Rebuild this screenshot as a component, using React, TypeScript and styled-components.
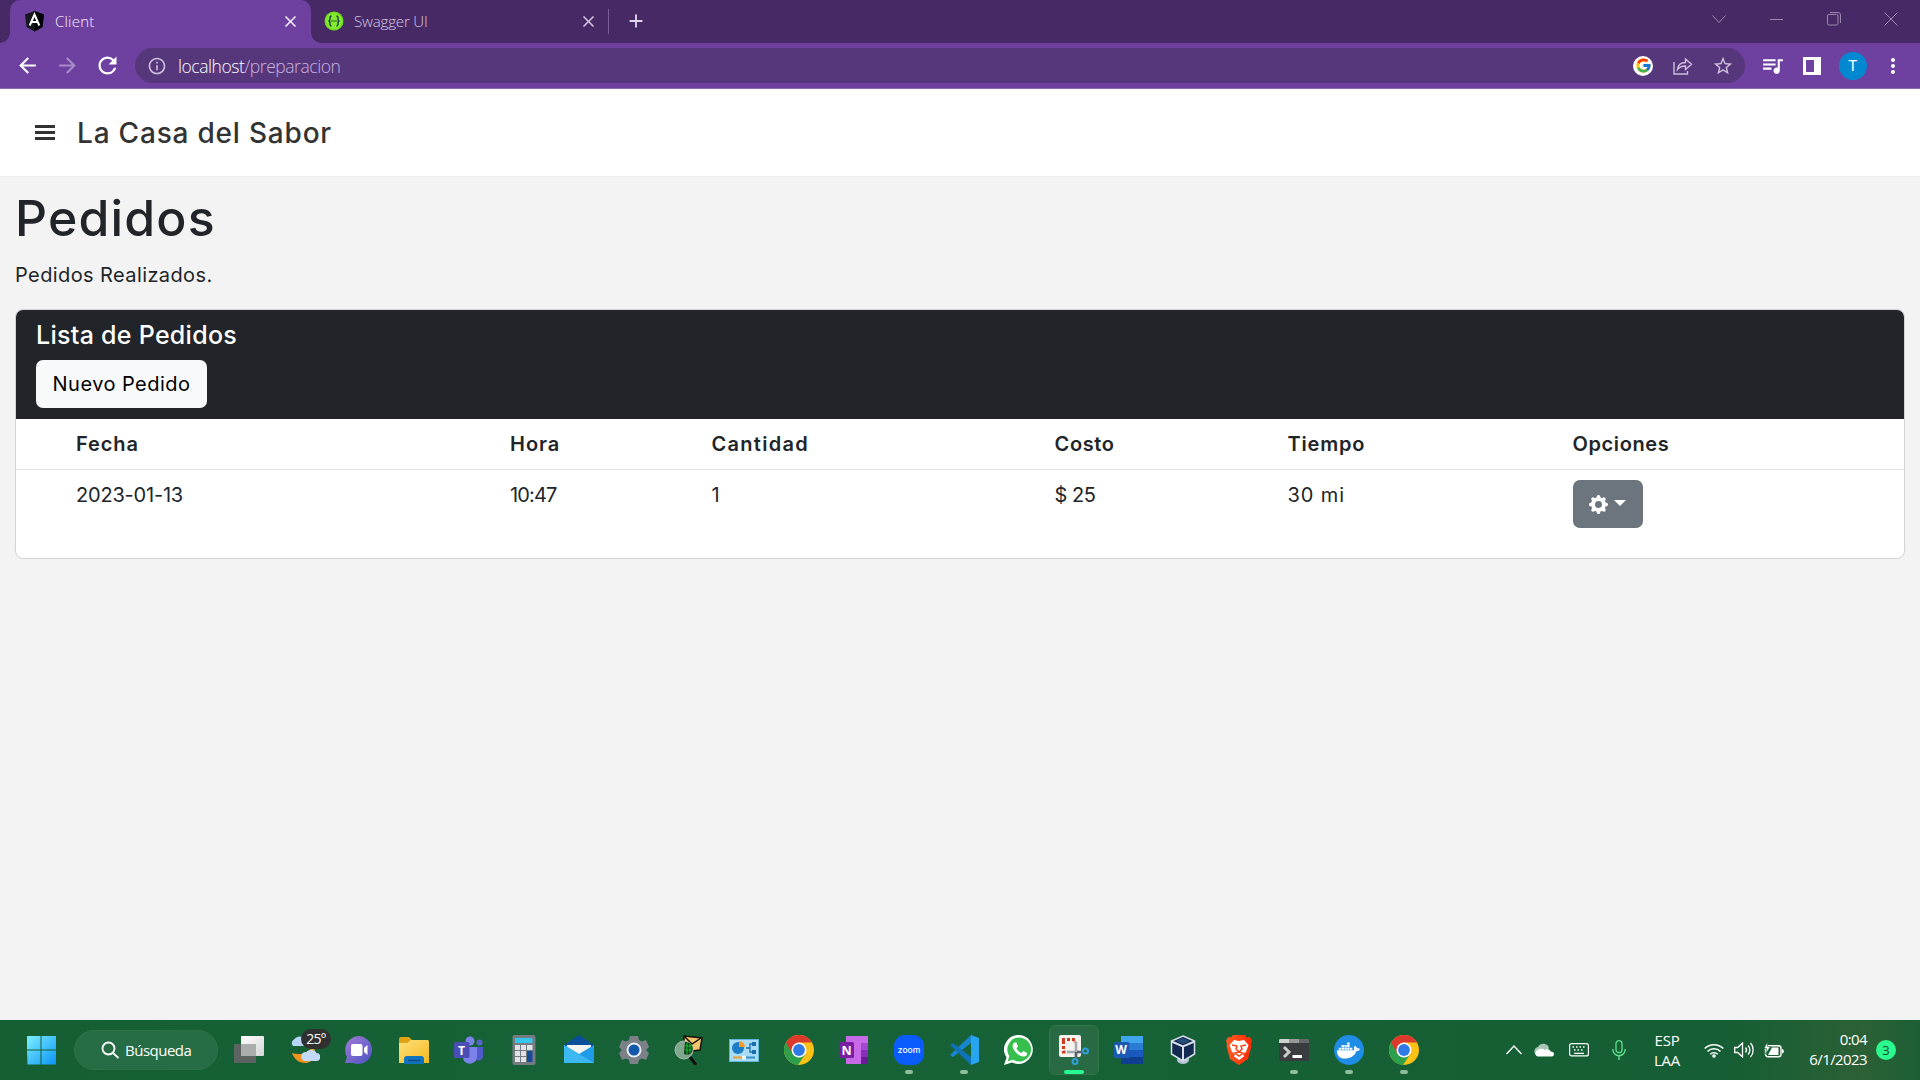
import React from "react";
import styled, { createGlobalStyle } from "styled-components";
import {
  MdArrowBack,
  MdArrowForward,
  MdClose,
  MdInfoOutline,
  MdQueueMusic,
  MdRefresh,
  MdStarBorder,
  MdAdd,
  MdMoreVert,
} from "react-icons/md";
import { FcGoogle } from "react-icons/fc";
import { BsGearFill } from "react-icons/bs";
import { FaDocker } from "react-icons/fa";

const GlobalStyle = createGlobalStyle`
  * { box-sizing: border-box; }
  body { margin: 0; background: #f3f3f3; overflow: hidden; }
  h1, h2, h3, p { margin: 0; font-weight: inherit; }
  button { font: inherit; border: 0; padding: 0; margin: 0; color: inherit; background: none; }
  svg { display: block; flex: none; }
`;

const ui = `"Open Sans", "Noto Sans", sans-serif`;
const brand = `Inter, "Noto Sans", sans-serif`;

const Screen = styled.div`
  width: 1920px;
  height: 1080px;
  display: flex;
  flex-direction: column;
  background: #f3f3f3;
  font-family: ${brand};
`;

/* ---------- browser ---------- */

const TabStrip = styled.div`
  height: 43px;
  flex: none;
  display: flex;
  background: #472a65;
  padding-left: 10px;
  color: #d5c6e6;
`;

const Tab = styled.div<{ $active?: boolean }>`
  width: ${(p) => (p.$active ? 301 : 297)}px;
  height: 43px;
  display: flex;
  align-items: center;
  padding: 0 ${(p) => (p.$active ? 11 : 10)}px 1px ${(p) => (p.$active ? 14 : 13)}px;
  border-radius: 10px 10px 0 0;
  background: ${(p) => (p.$active ? "#6e41a1" : "transparent")};
  color: ${(p) => (p.$active ? "#f6f0fc" : "#d5c6e6")};
  position: relative;

  &::before,
  &::after {
    content: "";
    display: ${(p) => (p.$active ? "block" : "none")};
    position: absolute;
    bottom: 0;
    width: 10px;
    height: 10px;
  }
  &::before {
    left: -10px;
    background: radial-gradient(circle at 0 0, transparent 9.5px, #6e41a1 10px);
  }
  &::after {
    right: -10px;
    background: radial-gradient(circle at 100% 0, transparent 9.5px, #6e41a1 10px);
  }
`;

const TabTitle = styled.span<{ $spacing: number }>`
  flex: 1;
  margin-left: 10px;
  font: 300 15px/20px ${ui};
  letter-spacing: ${(p) => p.$spacing}px;
`;

const TabDivider = styled.i`
  width: 1px;
  height: 25px;
  margin-top: 9px;
  background: #7a5f96;
`;

const NewTab = styled.div`
  width: 54px;
  height: 42px;
  display: grid;
  place-items: center;
  color: #e2d8ee;
`;

const WindowButtons = styled.div`
  margin-left: auto;
  display: flex;
`;

const WindowButton = styled.button`
  width: 57.3px;
  height: 37px;
  display: grid;
  place-items: center;
  color: #9c87b1;
`;

const Toolbar = styled.div`
  height: 46px;
  flex: none;
  display: flex;
  align-items: center;
  background: #6e41a1;
  border-bottom: 1px solid #8a6cae;
  padding-left: 7px;
  color: #fff;
`;

const NavButton = styled.button<{ $dim?: boolean }>`
  width: 40px;
  height: 40px;
  display: grid;
  place-items: center;
  color: ${(p) => (p.$dim ? "#a98bc9" : "#fff")};
`;

const AddressBar = styled.div`
  width: 1610px;
  height: 35px;
  margin-left: 8px;
  border-radius: 18px;
  display: flex;
  align-items: center;
  background: #57377b;
  color: #cdbfdc;
  padding: 0 12px;
`;

const Url = styled.span`
  flex: 1;
  margin-left: 11px;
  font: 300 17.5px/24px ${ui};
  letter-spacing: -0.45px;
  color: #c9b3e2;

  b {
    font-weight: 300;
    color: #fff;
  }
`;

const GoogleBadge = styled.span`
  width: 20px;
  height: 20px;
  border-radius: 50%;
  background: #fff;
  display: grid;
  place-items: center;
`;

const AddressAction = styled.span`
  width: 40px;
  display: grid;
  place-items: center;
`;

const AddressActions = styled.div`
  display: flex;
  align-items: center;
  margin-right: -10px;
`;

const ToolbarActions = styled.div`
  display: flex;
  align-items: center;
  margin-left: 7px;
`;

const ToolbarAction = styled.span`
  width: 40.3px;
  display: grid;
  place-items: center;
`;

const Avatar = styled.span`
  width: 28px;
  height: 28px;
  border-radius: 50%;
  background: #0288d1;
  display: grid;
  place-items: center;
  font: 400 15px/28px Roboto, sans-serif;
`;

/* ---------- page ---------- */

const PageHeader = styled.header`
  height: 88px;
  flex: none;
  display: flex;
  align-items: center;
  background: #fff;
  padding-left: 35px;
  border-bottom: 1px solid #ececec;
  color: #333;
`;

const MenuButton = styled.button`
  width: 20px;
  height: 15px;
  display: flex;
  flex-direction: column;
  justify-content: space-between;

  i {
    height: 3px;
    background: #333;
  }
`;

const Brand = styled.span`
  margin-left: 22px;
  font: 500 28px/40px ${brand};
  letter-spacing: 0.8px;
`;

const Content = styled.main`
  flex: 1;
  padding: 9px 15px 0;
  color: #212529;
`;

const Title = styled.h1`
  font: 500 50px/64px ${brand};
  letter-spacing: 1.15px;
`;

const Subtitle = styled.p`
  margin-top: 10px;
  font: 400 20px/30px ${brand};
  letter-spacing: 0.4px;
`;

const Card = styled.section`
  width: 1890px;
  height: 250px;
  margin-top: 19px;
  border: 1px solid #d2d3d4;
  border-radius: 8px;
  background: #fff;
  overflow: hidden;
`;

const CardHeader = styled.header`
  height: 109px;
  background: #212529;
  padding: 10px 20px 0;
`;

const CardTitle = styled.h2`
  color: #fff;
  font: 500 25px/30px ${brand};
  letter-spacing: 0.28px;
`;

const NewOrderButton = styled.button`
  width: 171px;
  height: 48px;
  margin-top: 10px;
  border-radius: 7px;
  background: #f8f9fa;
  color: #000;
  font: 400 20px/49px ${brand};
  letter-spacing: 0.46px;
`;

const TableRow = styled.div<{ $head?: boolean }>`
  display: grid;
  grid-template-columns: 434px 201.5px 343px 233px 285px 1fr;
  height: ${(p) => (p.$head ? 51 : 88)}px;
  padding: 10px 0 0 60px;
  border-bottom: ${(p) => (p.$head ? "1px solid #dee2e6" : "0")};
  font: ${(p) => (p.$head ? 600 : 400)} 20px/31px ${brand};
`;

const Cell = styled.span<{ $spacing: number }>`
  letter-spacing: ${(p) => p.$spacing}px;
`;

const OptionsButton = styled.button`
  width: 70px;
  height: 48px;
  border-radius: 7px;
  background: #6c757d;
  color: #fff;
  display: flex;
  align-items: center;
  justify-content: center;
  gap: 6px;
`;

const Caret = styled.i`
  border: 6px solid transparent;
  border-top-color: #fff;
  border-bottom: 0;
  margin-top: -2px;
`;

/* ---------- taskbar ---------- */

const Taskbar = styled.footer`
  height: 60px;
  flex: none;
  display: flex;
  align-items: center;
  background: linear-gradient(90deg, #165f35 0, #176236 45%, #165e35 90%, #2c6035 97%, #1d5f35 100%);
  padding-left: 26px;
  color: #fff;
  font: 400 15px/20px ${ui};
`;

const SearchPill = styled.div`
  width: 144px;
  height: 40px;
  margin-left: 18px;
  border-radius: 20px;
  border: 1px solid #2f7249;
  background: #266c44;
  display: flex;
  align-items: center;
  padding-left: 26px;
  gap: 5px;
  letter-spacing: -0.5px;
`;

const Apps = styled.div`
  display: flex;
  margin-left: 3px;
`;

const AppSlot = styled.div<{ $state?: "open" | "active" }>`
  width: 55px;
  height: 60px;
  display: grid;
  place-items: center;
  position: relative;

  &::before {
    content: "";
    display: ${(p) => (p.$state === "active" ? "block" : "none")};
    position: absolute;
    inset: 5px 2px 5px 3px;
    border-radius: 6px;
    border: 1px solid #33744b;
    background: #286a44;
  }
  &::after {
    content: "";
    display: ${(p) => (p.$state ? "block" : "none")};
    position: absolute;
    bottom: 6px;
    width: ${(p) => (p.$state === "active" ? 20 : 8)}px;
    height: 4px;
    border-radius: 2px;
    background: ${(p) => (p.$state === "active" ? "#25fb90" : "#8fbb9f")};
  }
  svg {
    position: relative;
  }
`;

const WeatherBadge = styled.span`
  position: absolute;
  left: 25px;
  top: 9px;
  width: 30px;
  height: 20px;
  border-radius: 10px;
  background: #303030;
  text-align: center;
  font: 400 14px/20px ${ui};
  letter-spacing: -0.9px;
`;

const Tray = styled.div`
  margin-left: auto;
  display: flex;
  align-items: center;
  height: 60px;
`;

const TrayIcon = styled.span<{ $width: number }>`
  width: ${(p) => p.$width}px;
  display: grid;
  place-items: center;
`;

const Language = styled.div`
  width: 56px;
  margin-top: -1px;
  text-align: center;
  letter-spacing: -0.2px;
`;

const Clock = styled.div`
  width: 74px;
  margin-top: -2px;
  text-align: right;
  letter-spacing: -0.6px;
`;

const Count = styled.span`
  width: 20px;
  height: 20px;
  margin: 0 24px 0 9px;
  border-radius: 50%;
  background: #2bfb8e;
  color: #14452a;
  text-align: center;
  font: 400 13px/20px ${ui};
`;

const Glyph = ({ children, w = 30, h = 30 }: { children: React.ReactNode; w?: number; h?: number }) => (
  <svg width={w} height={h} viewBox={`0 0 ${w} ${h}`} fill="none">
    {children}
  </svg>
);

const LetterMark = styled.text`
  font-family: "Open Sans", sans-serif;
  font-weight: 700;
  fill: #fff;
`;

const ChromeLogo = () => (
  <Glyph>
    <circle cx="15" cy="15" r="15" fill="#fbc116" />
    <path d="M15 15 2 7.5A15 15 0 0 0 14 30L21.500 18.750z" fill="#2da04c" />
    <path d="M2 7.500A15 15 0 0 1 28 7.500H15L8.500 18.750z" fill="#dc3a2d" />
    <circle cx="15" cy="15" r="7.500" fill="#fff" />
    <circle cx="15" cy="15" r="5.900" fill="#2f7ae5" />
  </Glyph>
);

const AngularLogo = () => (
  <Glyph w={21} h={22}>
    <path d="M10.500 1 20 4.400 18.500 17 10.500 21.500 2.500 17 1 4.400z" fill="#17171f" />
    <path d="M10.500 1 20 4.400 18.500 17 10.500 21.500z" fill="#050509" />
    <path d="m5.700 15.500 4.800-11 4.800 11M7.500 12h6" stroke="#fff" strokeWidth="2" />
  </Glyph>
);

const SwaggerLogo = () => (
  <Glyph w={20} h={20}>
    <circle cx="10" cy="10" r="9.500" fill="#6ddb1f" />
    <circle cx="10" cy="10" r="8" fill="#85ea2d" />
    <path
      d="M7.500 5C6 5 6 6 6 7.500S6 10 4.500 10C6 10 6 11 6 12.500S6 15 7.500 15M12.500 5C14 5 14 6 14 7.500S14 10 15.500 10C14 10 14 11 14 12.500S14 15 12.500 15M7.500 10h1m1 0h1m1 0h1"
      stroke="#173647"
      strokeWidth="1.300"
    />
  </Glyph>
);

const WindowsLogo = () => (
  <Glyph>
    <defs>
      <linearGradient id="win" x1="0" y1="0" x2="1" y2="1">
        <stop stopColor="#7df0ff" />
        <stop offset="1" stopColor="#0a93f5" />
      </linearGradient>
    </defs>
    <path d="M1.500 1h13v13.500H1V1.500zM15.500 1H30v13.500H15.500zM1 15.500h13.500v14h-13zM15.500 15.500H30v14H15.500z" fill="url(#win)" />
  </Glyph>
);

const TaskView = () => (
  <Glyph>
    <defs>
      <linearGradient id="tv" x1="0" y1="0" x2="1" y2="1">
        <stop stopColor="#fff" />
        <stop offset="1" stopColor="#d5d5d5" />
      </linearGradient>
    </defs>
    <rect x="0" y="9" width="22" height="19" rx="1" fill="#5d6360" />
    <rect x="7" y="1" width="23" height="20" rx="1" fill="url(#tv)" />
    <path d="M7 9h15v12H7z" fill="#a9adab" />
  </Glyph>
);

const Weather = () => (
  <Glyph w={32} h={34}>
    <path d="M5 13h10a4 4 0 0 0 0-8 6 6 0 0 0-9 1.500A4 4 0 0 0 5 13z" fill="#b9d5f5" />
    <path d="M4 20c5 2 11 1 15-1l6-5c5 6 1 16-8 16C11 30 6 26 4 20z" fill="#f2931d" />
    <path d="M17 28h11a4 4 0 0 0 .5-8 6 6 0 0 0-10-1 4.500 4.500 0 0 0-1.500 9z" fill="#c3daf8" />
  </Glyph>
);

const Chat = () => (
  <Glyph>
    <defs>
      <linearGradient id="chat" x1="0" y1="0" x2="1" y2="1">
        <stop stopColor="#a47bd3" />
        <stop offset="1" stopColor="#4a54c4" />
      </linearGradient>
    </defs>
    <path d="M15 1a14 14 0 1 1-6 27H1l2-6A14 14 0 0 1 15 1z" fill="url(#chat)" />
    <rect x="7" y="9" width="11.500" height="12" rx="2" fill="#fff" />
    <path d="m20 13 3.500-3v10L20 17z" fill="#fff" />
  </Glyph>
);

const Explorer = () => (
  <Glyph>
    <defs>
      <linearGradient id="fold" x1="0" y1="0" x2="1" y2="1">
        <stop stopColor="#ffe07a" />
        <stop offset="1" stopColor="#f4b91f" />
      </linearGradient>
    </defs>
    <path d="M0 4c0-1 .5-2 2-2h8l3 3-3 6H0z" fill="#e0a316" />
    <path d="M0 8h8l4-3h16c1.500 0 2 .5 2 2v21H0z" fill="url(#fold)" />
    <path d="M5 29v-5c0-2 1-3 3-3h14c2 0 3 1 3 3v5z" fill="#0f72bd" />
    <path d="M9 25.500h12" stroke="#0a4f8b" strokeWidth="1.500" />
  </Glyph>
);

const Teams = () => (
  <Glyph>
    <circle cx="16" cy="6" r="4.500" fill="#7b83eb" />
    <circle cx="25.500" cy="7.500" r="3" fill="#5a62cf" />
    <path d="M20 12h9v9c0 5-6 6-9 3z" fill="#5059c9" />
    <path d="M9 12h14v9c0 10-14 10-14 1z" fill="#7b83eb" />
    <rect x="0" y="7" width="15.500" height="16" rx="1.500" fill="#4b4fb5" />
    <LetterMark x="4" y="19.500" fontSize="12">T</LetterMark>
  </Glyph>
);

const Calculator = () => (
  <Glyph w={24}>
    <rect x="0.500" y="0" width="23" height="30" rx="2" fill="#757b80" />
    <path d="M3 3h17.500v5H3z" fill="#35c6ec" />
    <path d="M3 10h5v5H3zm6 0h5v5H9zm6 0h5.500v5H15zM3 16h5v5H3zm6 0h5v5H9zm-6 6h5v5H3zm6 0h5v5H9z" fill="#dfe3e6" />
    <path d="M15 16h5.500v11H15z" fill="#164b98" />
  </Glyph>
);

const Mail = () => (
  <Glyph>
    <path d="M0 10 15 0l15 10v8H0z" fill="#0a4f9c" />
    <path d="M3 10h24v10H3z" fill="#f3f3f3" />
    <path d="M0 10l15 9 15-9v18H0z" fill="#1f9ce8" />
    <path d="M0 10v18h30z" fill="#3cb9f2" />
  </Glyph>
);

const Settings = () => (
  <Glyph>
    <path
      d="M11 1h8l1 4 3 1.500 4-1.500 3 7-3 3 3 3-3 7-4-1.500L20 25l-1 4h-8l-1-4-3-1.500L3 25l-3-7 3-3-3-3 3-7 4 1.500L10 5z"
      fill="#7b8187"
    />
    <circle cx="15" cy="15" r="7.500" fill="#e9edf0" />
    <circle cx="15" cy="15" r="5.500" fill="#1458ac" />
  </Glyph>
);

const MailSearch = () => (
  <Glyph>
    <path d="m10 1 18 2-2 12-16 2z" fill="#f3c66d" stroke="#191307" strokeWidth="1.500" />
    <path d="m11 2 7 7 9-6" stroke="#191307" strokeWidth="1.500" />
    <circle cx="10" cy="15" r="9" fill="#86aa93" fillOpacity=".95" stroke="#a9bcaf" />
    <path d="M11 7c6 0 9 4 7 10-2 3-5 3-8 2z" fill="#0a3d10" />
    <path d="M13 8v11m3-10v9M11 11h7m-7 4h7" stroke="#16b52e" strokeWidth="1.200" />
    <path d="m16 22 6 8" stroke="#111" strokeWidth="3" />
  </Glyph>
);

const ControlPanel = () => (
  <Glyph>
    <rect x=".5" y="4.500" width="29" height="22" fill="#a9dcf5" stroke="#5fb5dd" />
    <circle cx="9" cy="13" r="6" fill="#1b7cc7" />
    <path d="M10 12V6a6 6 0 0 1 6 6z" fill="#f49b2a" />
    <path d="M17 13h4V9h3m-3 4v4h3" stroke="#1a6cb0" strokeWidth="1.300" />
    <path d="M23 7h4v4h-4zm0 8h4v4h-4z" fill="#1a6cb0" />
    <path d="M4 22.500h10" stroke="#f49b2a" strokeWidth="2" />
    <path d="M14 22.500h12" stroke="#3090cc" strokeWidth="2" />
    <circle cx="15" cy="22.500" r="2" fill="#fff" />
  </Glyph>
);

const OneNote = () => (
  <Glyph>
    <path d="M7 1h22v28H7z" fill="#c86ae8" />
    <path d="M22 8h7v7h-7z" fill="#a548d0" />
    <path d="M22 15h7v7h-7z" fill="#8b2fba" />
    <path d="M22 22h7v7h-7z" fill="#6a1c96" />
    <rect x="0" y="7" width="15" height="16" rx="1.500" fill="#7a1fa2" />
    <LetterMark x="2.500" y="19.500" fontSize="12.500">N</LetterMark>
  </Glyph>
);

const Zoom = () => (
  <Glyph>
    <rect width="30" height="30" rx="11" fill="#0b5cff" />
    <text x="15" y="17.500" textAnchor="middle" fontFamily="Inter, sans-serif" fontWeight="500" fontSize="8.500" fill="#fff">
      zoom
    </text>
  </Glyph>
);

const VsCode = () => (
  <Glyph>
    <path d="m1 20 21-20v8L4 22z" fill="#1a86d0" />
    <path d="m1 10 3-2 18 14v8z" fill="#0f72ba" />
    <path d="m22 0 8 3v24l-8 3z" fill="#27a5ee" />
  </Glyph>
);

const WhatsApp = () => (
  <Glyph>
    <path d="M15.500 0A14.500 14.500 0 1 1 8 27.500L0 30l2.500-7.500A14.500 14.500 0 0 1 15.500 0z" fill="#fff" />
    <path d="M15.500 2.500A12 12 0 1 1 9 24.800L3.800 26.200 5.300 21A12 12 0 0 1 15.500 2.500z" fill="#37bf4e" />
    <path
      d="M11 7.500c-3 1-3 4-1 7.500 3 4.500 7 7 10.500 6.500 2-.5 3-2 2.500-3.500l-3.500-2-2 2c-2-.5-4-2.500-5-4.500l1.500-2-1.500-4z"
      fill="#fff"
    />
  </Glyph>
);

const Snip = () => (
  <Glyph>
    <rect x="0" y="0" width="22" height="22" rx="2" fill="#f5f2f0" />
    <path d="M3 4.500h13v3M4.500 6v11H9" stroke="#cf3b20" strokeWidth="3" strokeDasharray="3 2" />
    <path d="M17 7v15M8 17h15" stroke="#a3a9ac" strokeWidth="2.500" />
    <path d="M17 17v7m1-7h6" stroke="#5b6468" strokeWidth="2.500" />
    <circle cx="16" cy="26.500" r="2.500" stroke="#2f9fdb" strokeWidth="2" />
    <circle cx="26.500" cy="16" r="2.500" stroke="#2f9fdb" strokeWidth="2" />
  </Glyph>
);

const Word = () => (
  <Glyph>
    <path d="M7 1h22v7H7z" fill="#41a5ee" />
    <path d="M7 8h22v7H7z" fill="#2b7cd3" />
    <path d="M7 15h22v7H7z" fill="#185abd" />
    <path d="M7 22h22v7H7z" fill="#103f91" />
    <rect x="0" y="7" width="15.500" height="16" rx="1.500" fill="#1b59b5" />
    <LetterMark x="1.200" y="19" fontSize="12">W</LetterMark>
  </Glyph>
);

const VirtualBox = () => (
  <Glyph w={28}>
    <ellipse cx="13" cy="25" rx="6" ry="4" fill="#b4c3d3" />
    <path d="m13 1 11.500 5v13L13 26 1.500 19V6z" fill="#13294f" stroke="#d5deea" strokeWidth="1.500" />
    <path d="m1.500 6.500 11.500 5 11.500-5M13 11.500V26" stroke="#d5deea" strokeWidth="2" />
    <path d="m6 6 7-3 7 3-7 3z" fill="#274c78" />
  </Glyph>
);

const Brave = () => (
  <Glyph w={26}>
    <defs>
      <linearGradient id="brave" x1="0" y1="0" x2="1" y2="0">
        <stop stopColor="#ff5a1f" />
        <stop offset="1" stopColor="#fb2b08" />
      </linearGradient>
    </defs>
    <path d="M7 0h12l2 2.500 3-.5 2 4-1 3 .5 2L22 24l-9 6-9-6L.5 11 1 9 0 6l2-4 3 .5z" fill="url(#brave)" />
    <path
      d="m8 5 5 1 5-1 4.500 5-2.500 7-3 2 1 2.500L13 25l-5-3.500L9 19l-3-2-2.500-7z"
      fill="#fff"
    />
    <path d="m6 10 5 1-1 3 3 3 3-3-1-3 5-1M9 18l4-1 4 1-4 3z" stroke="#fb4314" strokeWidth="1.500" />
  </Glyph>
);

const Terminal = () => (
  <Glyph>
    <rect x="0" y="4" width="30" height="22" rx="1.500" fill="#3a3d3f" />
    <path d="M0 8V5.500C0 4.500.5 4 1.500 4H10v4z" fill="#cfd1d1" />
    <path d="M10 4h10v4H10z" fill="#96999a" />
    <path d="M20 4h8.500c1 0 1.500.5 1.500 1.500V8H20z" fill="#66696a" />
    <path d="m5 12 5 5-5 5" stroke="#c9cbcb" strokeWidth="3" />
    <path d="M13.500 21.500H23" stroke="#fff" strokeWidth="3" />
  </Glyph>
);

const DockerBadge = styled.span`
  width: 30px;
  height: 30px;
  border-radius: 50%;
  background: #1f8ce6;
  color: #fff;
  display: grid;
  place-items: center;
`;

const apps: { name: string; icon: React.ReactNode; state?: "open" | "active" }[] = [
  { name: "taskview", icon: <TaskView /> },
  { name: "weather", icon: <><Weather /><WeatherBadge>25°</WeatherBadge></> },
  { name: "chat", icon: <Chat /> },
  { name: "explorer", icon: <Explorer /> },
  { name: "teams", icon: <Teams /> },
  { name: "calculator", icon: <Calculator /> },
  { name: "mail", icon: <Mail /> },
  { name: "settings", icon: <Settings /> },
  { name: "mailsearch", icon: <MailSearch /> },
  { name: "panel", icon: <ControlPanel /> },
  { name: "chrome", icon: <ChromeLogo /> },
  { name: "onenote", icon: <OneNote /> },
  { name: "zoom", icon: <Zoom />, state: "open" },
  { name: "vscode", icon: <VsCode />, state: "open" },
  { name: "whatsapp", icon: <WhatsApp /> },
  { name: "snip", icon: <Snip />, state: "active" },
  { name: "word", icon: <Word /> },
  { name: "virtualbox", icon: <VirtualBox /> },
  { name: "brave", icon: <Brave /> },
  { name: "terminal", icon: <Terminal />, state: "open" },
  { name: "docker", icon: <DockerBadge><FaDocker size={23} /></DockerBadge>, state: "open" },
  { name: "chrome2", icon: <ChromeLogo />, state: "open" },
];

const columns: [string, number][] = [
  ["Fecha", 0.9],
  ["Hora", 1],
  ["Cantidad", 1.3],
  ["Costo", 0.65],
  ["Tiempo", 0.8],
  ["Opciones", 0.6],
];

const order: [string, number][] = [
  ["2023-01-13", -0.2],
  ["10:47", -0.85],
  ["1", 0],
  ["$ 25", -0.5],
  ["30 mi", 0.9],
];

export default function App() {
  return (
    <Screen>
      <GlobalStyle />
      <TabStrip>
        <Tab $active>
          <AngularLogo />
          <TabTitle $spacing={0.2}>Client</TabTitle>
          <MdClose size={19} />
        </Tab>
        <Tab>
          <SwaggerLogo />
          <TabTitle $spacing={-0.15}>Swagger UI</TabTitle>
          <MdClose size={19} />
        </Tab>
        <TabDivider />
        <NewTab>
          <MdAdd size={22} />
        </NewTab>
        <WindowButtons>
          <WindowButton>
            <Glyph w={14} h={14}>
              <path d="m.5 3.500 6.500 7 6.500-7" stroke="currentColor" />
            </Glyph>
          </WindowButton>
          <WindowButton>
            <Glyph w={14} h={14}>
              <path d="M0 7.500h13" stroke="currentColor" />
            </Glyph>
          </WindowButton>
          <WindowButton>
            <Glyph w={14} h={14}>
              <rect x=".5" y="2.500" width="10.500" height="10.500" rx="1.500" stroke="currentColor" />
              <path d="M3 .5h8a2.500 2.500 0 0 1 2.500 2.500v8" stroke="currentColor" />
            </Glyph>
          </WindowButton>
          <WindowButton>
            <Glyph w={14} h={14}>
              <path d="m.5.5 13 13m0-13-13 13" stroke="currentColor" />
            </Glyph>
          </WindowButton>
        </WindowButtons>
      </TabStrip>

      <Toolbar>
        <NavButton><MdArrowBack size={25} /></NavButton>
        <NavButton $dim><MdArrowForward size={25} /></NavButton>
        <NavButton><MdRefresh size={27} /></NavButton>
        <AddressBar>
          <MdInfoOutline size={20} />
          <Url><b>localhost</b>/preparacion</Url>
          <AddressActions>
            <AddressAction>
              <GoogleBadge><FcGoogle size={17} /></GoogleBadge>
            </AddressAction>
            <AddressAction>
              <Glyph w={20} h={18}>
                <path d="M1 5v12h13.500v-3M4.500 12.500C5 8 8 5.500 12.500 5.500V2L18.500 7.300 12.500 12.500V9C9 9 6.500 10 4.500 12.500z" stroke="currentColor" strokeWidth="1.400" />
              </Glyph>
            </AddressAction>
            <AddressAction><MdStarBorder size={22} /></AddressAction>
          </AddressActions>
        </AddressBar>
        <ToolbarActions>
          <ToolbarAction><MdQueueMusic size={25} /></ToolbarAction>
          <ToolbarAction>
            <Glyph w={18} h={18}>
              <path d="M1.500 1.500h15v15h-15z" stroke="#fff" strokeWidth="3" />
              <path d="M11 1h6v16h-6z" fill="#fff" />
            </Glyph>
          </ToolbarAction>
          <ToolbarAction><Avatar>T</Avatar></ToolbarAction>
          <ToolbarAction><MdMoreVert size={24} /></ToolbarAction>
        </ToolbarActions>
      </Toolbar>

      <PageHeader>
        <MenuButton aria-label="Menu"><i /><i /><i /></MenuButton>
        <Brand>La Casa del Sabor</Brand>
      </PageHeader>

      <Content>
        <Title>Pedidos</Title>
        <Subtitle>Pedidos Realizados.</Subtitle>
        <Card>
          <CardHeader>
            <CardTitle>Lista de Pedidos</CardTitle>
            <NewOrderButton>Nuevo Pedido</NewOrderButton>
          </CardHeader>
          <TableRow $head>
            {columns.map(([label, spacing]) => (
              <Cell key={label} $spacing={spacing}>{label}</Cell>
            ))}
          </TableRow>
          <TableRow>
            {order.map(([value, spacing]) => (
              <Cell key={value} $spacing={spacing}>{value}</Cell>
            ))}
            <OptionsButton aria-label="Opciones">
              <BsGearFill size={19} />
              <Caret />
            </OptionsButton>
          </TableRow>
        </Card>
      </Content>

      <Taskbar>
        <WindowsLogo />
        <SearchPill>
          <Glyph w={19} h={18}>
            <circle cx="7.500" cy="7.500" r="6" stroke="#fff" strokeWidth="1.800" />
            <path d="m12 12 5.500 5" stroke="#fff" strokeWidth="1.800" />
          </Glyph>
          Búsqueda
        </SearchPill>
        <Apps>
          {apps.map((app) => (
            <AppSlot key={app.name} $state={app.state}>{app.icon}</AppSlot>
          ))}
        </Apps>
        <Tray>
          <TrayIcon $width={30}>
            <Glyph w={16} h={10}>
              <path d="m.5 9 7.500-8 7.500 8" stroke="#fff" strokeWidth="1.300" />
            </Glyph>
          </TrayIcon>
          <TrayIcon $width={30}>
            <Glyph w={20} h={14}>
              <path d="M3 12.500A4.500 4.500 0 0 1 4 4a6 6 0 0 1 11 1l-3 6z" fill="#a9c7b4" />
              <path d="M3.500 13.500a3.500 3.500 0 0 1 0-6.500c3-2 5-1.500 7.500 0 2-1.500 5-1 5.500 1.500 4.500 0 4.500 5 1 5z" fill="#fff" />
            </Glyph>
          </TrayIcon>
          <TrayIcon $width={40}>
            <Glyph w={20} h={14}>
              <rect x=".6" y=".6" width="18.800" height="12.300" rx="2" stroke="#fff" strokeWidth="1.200" />
              <path d="M3.500 4h1.500m2 0h1.500m2 0H12m2 0h1.500M5 7h1.500m2 0H10m2 0h1.500M5 10.300h10" stroke="#fff" strokeWidth="1.300" />
            </Glyph>
          </TrayIcon>
          <TrayIcon $width={40}>
            <Glyph w={14} h={20}>
              <rect x="4" y=".7" width="6" height="12" rx="3" stroke="#5fe08c" strokeWidth="1.300" />
              <path d="M.8 9c0 9 12.400 9 12.400 0M7 15.500V20" stroke="#5fe08c" strokeWidth="1.400" />
            </Glyph>
          </TrayIcon>
          <Language>ESP<br />LAA</Language>
          <TrayIcon $width={38}>
            <Glyph w={20} h={15}>
              <path d="M.7 5.500a13.200 13.200 0 0 1 18.600 0M3.500 8.500a9.200 9.200 0 0 1 13 0M6.300 11.200a5.200 5.200 0 0 1 7.400 0" stroke="#fff" strokeWidth="1.500" />
              <circle cx="10" cy="13" r="1.800" fill="#fff" />
            </Glyph>
          </TrayIcon>
          <TrayIcon $width={22}>
            <Glyph w={20} h={16}>
              <path d="M.7 5.500h3L8.500 1v14l-4.800-4.500h-3z" stroke="#fff" strokeWidth="1.300" />
              <path d="M11.500 5.500c1.300 1.500 1.300 3.500 0 5M14 3.500c2.500 2.500 2.500 6.500 0 9M16.500 1c3.500 3.500 3.500 10.500 0 14" stroke="#fff" strokeWidth="1.300" />
            </Glyph>
          </TrayIcon>
          <TrayIcon $width={38}>
            <Glyph w={20} h={17}>
              <rect x="1.500" y="3.700" width="15.500" height="11" rx="2.500" stroke="#fff" strokeWidth="1.400" />
              <path d="M18 7c2.500 0 2.500 4.500 0 4.500z" fill="#fff" />
              <path d="M8 5.500h6.500v7.500H4z" fill="#fff" />
              <path d="M3.500 0 0 6.500h2.500L1.500 12 6.500 4.500h-3z" fill="#fff" stroke="#165f35" strokeWidth=".6" />
            </Glyph>
          </TrayIcon>
          <Clock>0:04<br />6/1/2023</Clock>
          <Count>3</Count>
        </Tray>
      </Taskbar>
    </Screen>
  );
}
